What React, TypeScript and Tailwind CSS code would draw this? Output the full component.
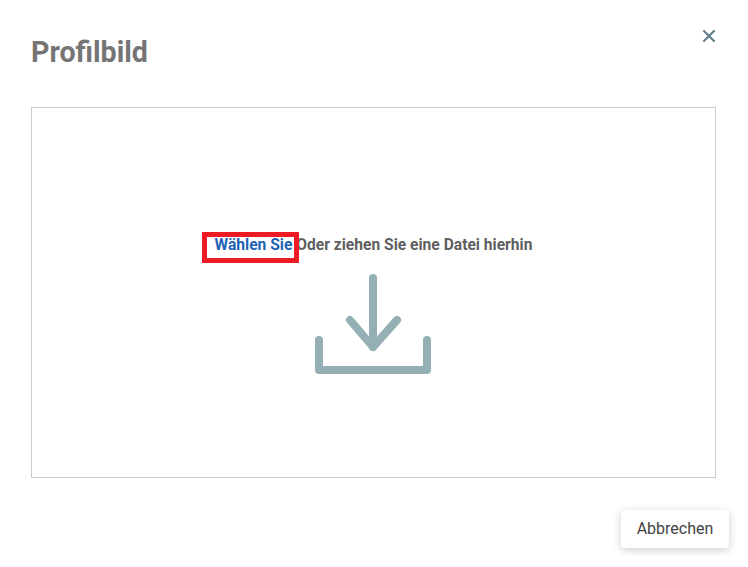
import { X } from "lucide-react";

function DownloadIcon() {
  return (
    <svg width="118" height="102" viewBox="0 0 118 102" fill="none" className="mt-[18px] -ml-[2px]">
      <g stroke="#94b0b4" strokeWidth="8" strokeLinecap="round" strokeLinejoin="round">
        <path d="M59 5V74" />
        <path d="M36 47L59 74L83 47" />
        <path d="M5 67V97H113V67" />
      </g>
    </svg>
  );
}

export default function App() {
  return (
    <div className="flex h-[567px] w-[748px] flex-col overflow-hidden bg-white font-['Roboto',sans-serif]">
      <header className="flex h-[107px] items-start justify-between pl-[31px] pr-[29px]">
        <h1 className="mt-[34px] text-[28.6px] leading-[36px] font-bold text-[#757575]">Profilbild</h1>
        <button className="mt-[26px] text-[#607d8b]">
          <X size={20} strokeWidth={2.5} />
        </button>
      </header>

      <div className="mx-[31px] flex h-[371px] w-[685px] flex-col items-center border border-[#cccccc] pt-[127px]">
        <p className="relative text-[15.6px] leading-[20px] font-bold text-[#5f5f5f]">
          <span className="relative text-[#1f63b5]">
            Wählen Sie
            <span className="absolute top-[-4px] left-[-13px] h-[31px] w-[97px] border-[5px] border-[#ed1c24]" />
          </span>{" "}
          Oder ziehen Sie eine Datei hierhin
        </p>
        <DownloadIcon />
      </div>

      <footer className="flex justify-end pt-[32px] pr-[19px]">
        <button className="h-[38px] w-[108px] rounded-[3px] bg-white text-[16px] text-[#424242] shadow-[0_2px_8px_rgba(0,0,0,0.2)]">
          Abbrechen
        </button>
      </footer>
    </div>
  );
}
